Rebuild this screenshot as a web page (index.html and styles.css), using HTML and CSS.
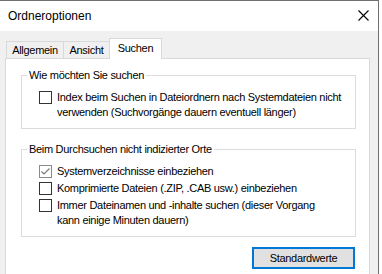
FILE: index.html
```html
<!DOCTYPE html>
<html lang="de">
<head>
    <meta charset="UTF-8">
    <title>Ordneroptionen</title>
    <link rel="stylesheet" href="styles.css">
</head>
<body>
    <div class="window">
        <div class="titlebar">
            <span class="title">Ordneroptionen</span>
            <svg class="close" width="11" height="11" viewBox="0 0 11 11"><path d="M0.5 0.5L10.5 10.5M10.5 0.5L0.5 10.5" stroke="#000" stroke-width="1.1" fill="none"/></svg>
        </div>
        <div class="content">
            <div class="tabs">
                <div class="tab">Allgemein</div>
                <div class="tab">Ansicht</div>
                <div class="tab active">Suchen</div>
            </div>
            <div class="panel">
                <fieldset class="group">
                    <legend>Wie möchten Sie suchen</legend>
                    <div class="opts">
                        <label class="opt"><span class="box"></span><span>Index beim Suchen in Dateiordnern nach Systemdateien nicht verwenden (Suchvorgänge dauern eventuell länger)</span></label>
                    </div>
                </fieldset>
                <fieldset class="group second">
                    <legend>Beim Durchsuchen nicht indizierter Orte</legend>
                    <div class="opts">
                        <label class="opt"><span class="box checked"><svg width="11" height="11" viewBox="0 0 11 11"><path d="M1.5 5.5L4 8L9.5 2.5" stroke="#7a7a7a" stroke-width="1.2" fill="none"/></svg></span><span>Systemverzeichnisse einbeziehen</span></label>
                        <label class="opt"><span class="box"></span><span>Komprimierte Dateien (.ZIP, .CAB usw.) einbeziehen</span></label>
                        <label class="opt"><span class="box"></span><span>Immer Dateinamen und -inhalte suchen (dieser Vorgang kann einige Minuten dauern)</span></label>
                    </div>
                </fieldset>
                <div class="buttons">
                    <button>Standardwerte</button>
                </div>
            </div>
        </div>
    </div>
</body>
</html>
```

FILE: styles.css
```css
body { margin: 0; background: #fff; font-family: "Liberation Sans", Arial, sans-serif; font-size: 11px; letter-spacing: -0.3px; color: #000; }
.window { width: 378px; height: 300px; background: #f0f0f0; border-top: 1px solid #6f6f6f; border-right: 1px solid #6f6f6f; }
.titlebar { height: 30px; background: #fff; display: flex; align-items: center; justify-content: space-between; padding: 0 9px 0 8px; }
.title { font-size: 12px; letter-spacing: 0; }
.close { margin-top: -1px; }
.content { padding: 6px 8px 0 5px; }
.tabs { display: flex; align-items: flex-end; padding-left: 1px; height: 21px; }
.tab { box-sizing: border-box; width: 57px; height: 17px; line-height: 17px; text-align: center; border: 1px solid #d9d9d9; border-bottom: none; border-right: none; background: #f0f0f0; }
.tab:nth-child(2) { width: 46px; }
.tab.active { width: 53px; height: 21px; line-height: 19px; background: #fff; border-right: 1px solid #d9d9d9; position: relative; top: 1px; z-index: 1; }
.panel { background: #fff; border: 1px solid #d9d9d9; padding: 9px 13px 10px 15px; height: 230px; }
.group { margin: 0; padding: 0 0 8px 5px; border: 1px solid #dcdcdc; }
.group legend { padding: 0 2px; line-height: 14px; }
.second { margin-top: 13px; }
.opts { padding: 8px 0 0 12px; display: flex; flex-direction: column; gap: 2px; }
.second .opts { padding-right: 24px; }
.opt { display: flex; align-items: flex-start; gap: 5px; line-height: 15px; }
.box { flex: none; width: 11px; height: 11px; border: 1px solid #333; background: #fff; margin-top: 1px; display: flex; }
.box.checked { border-color: #8a8a8a; }
.buttons { display: flex; justify-content: flex-end; padding-top: 10px; margin-right: 1px; }
button { font: inherit; letter-spacing: inherit; width: 103px; height: 22px; background: #e1e1e1; border: 2px solid #0078d7; padding: 0; color: #000; }
```
